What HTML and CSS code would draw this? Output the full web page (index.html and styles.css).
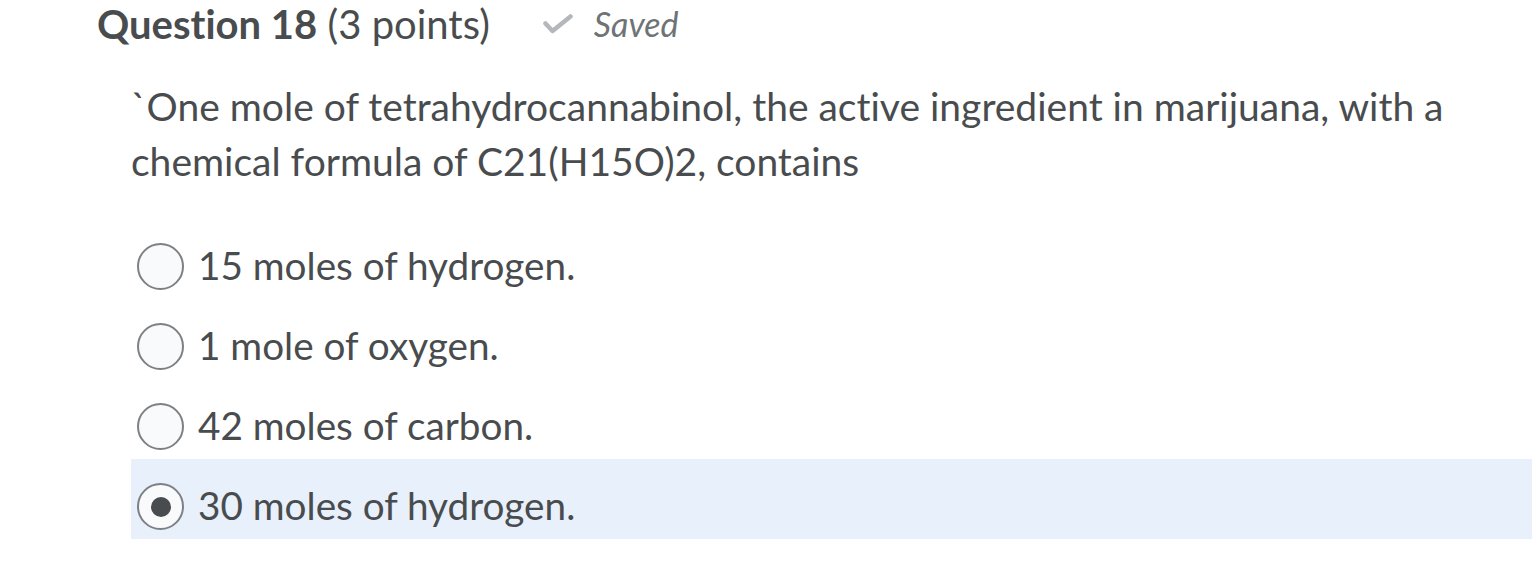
FILE: index.html
```html
<!DOCTYPE html>
<html lang="en">
<head>
<meta charset="utf-8">
<title>Question 18</title>
<link rel="stylesheet" href="styles.css">
</head>
<body>
<div class="page">
  <div class="qhead">
    <h2 class="qtitle"><strong>Question 18</strong> (3 points)</h2>
    <span class="saved">
      <svg class="check" viewBox="0 0 30 20" width="30" height="20" aria-hidden="true">
        <path d="M2.5 9.5 L9.5 17 L27.5 2.5" fill="none" stroke="#b4b8bc" stroke-width="4.5" stroke-linecap="round" stroke-linejoin="round"/>
      </svg>
      <span class="saved-text">Saved</span>
    </span>
  </div>
  <div class="qbody">
    <p class="qtext">`One mole of tetrahydrocannabinol, the active ingredient in marijuana, with a chemical formula of C21(H15O)2, contains</p>
    <div class="options">
      <label class="opt"><span class="radio"></span><span class="opt-text">15 moles of hydrogen.</span></label>
      <label class="opt"><span class="radio"></span><span class="opt-text">1 mole of oxygen.</span></label>
      <label class="opt"><span class="radio"></span><span class="opt-text">42 moles of carbon.</span></label>
      <label class="opt selected"><span class="radio checked"></span><span class="opt-text">30 moles of hydrogen.</span></label>
    </div>
  </div>
</div>
</body>
</html>
```
FILE: styles.css
```css
html, body {
  margin: 0;
  padding: 0;
  background: #ffffff;
}
body {
  font-family: Lato, "Noto Sans", sans-serif;
  color: #494c4e;
  font-variant-ligatures: no-common-ligatures;
}
.page {
  padding: 2px 0 0 97px;
}
.qhead {
  display: flex;
  align-items: center;
  gap: 53px;
  height: 44px;
}
.qtitle {
  margin: 0;
  font-size: 40px;
  font-weight: 400;
  line-height: 44px;
}
.qtitle strong {
  font-weight: 700;
}
.saved {
  display: flex;
  align-items: center;
  gap: 21px;
  color: #6e7376;
}
.check {
  display: block;
}
.saved-text {
  font-style: italic;
  font-size: 34px;
  line-height: 44px;
}
.qbody {
  padding-left: 34px;
}
.qtext {
  margin: 33px 0 0 0;
  font-size: 39px;
  line-height: 55px;
  max-width: 1360px;
}
.options {
  margin-top: 30px;
  display: flex;
  flex-direction: column;
}
.opt {
  display: flex;
  align-items: flex-start;
  height: 80px;
  box-sizing: border-box;
  padding: 24px 0 0 6px;
  gap: 14px;
}
.opt.selected {
  background: #e8f0fb;
}
.radio {
  flex: none;
  width: 47px;
  height: 47px;
  box-sizing: border-box;
  border: 2px solid #7d8186;
  border-radius: 50%;
  background: #f9fafc;
  display: flex;
  align-items: center;
  justify-content: center;
}
.radio.checked::after {
  content: "";
  width: 20px;
  height: 20px;
  border-radius: 50%;
  background: #494c4e;
}
.opt-text {
  font-size: 38.7px;
  line-height: 47px;
  margin-top: -1px;
}
```
